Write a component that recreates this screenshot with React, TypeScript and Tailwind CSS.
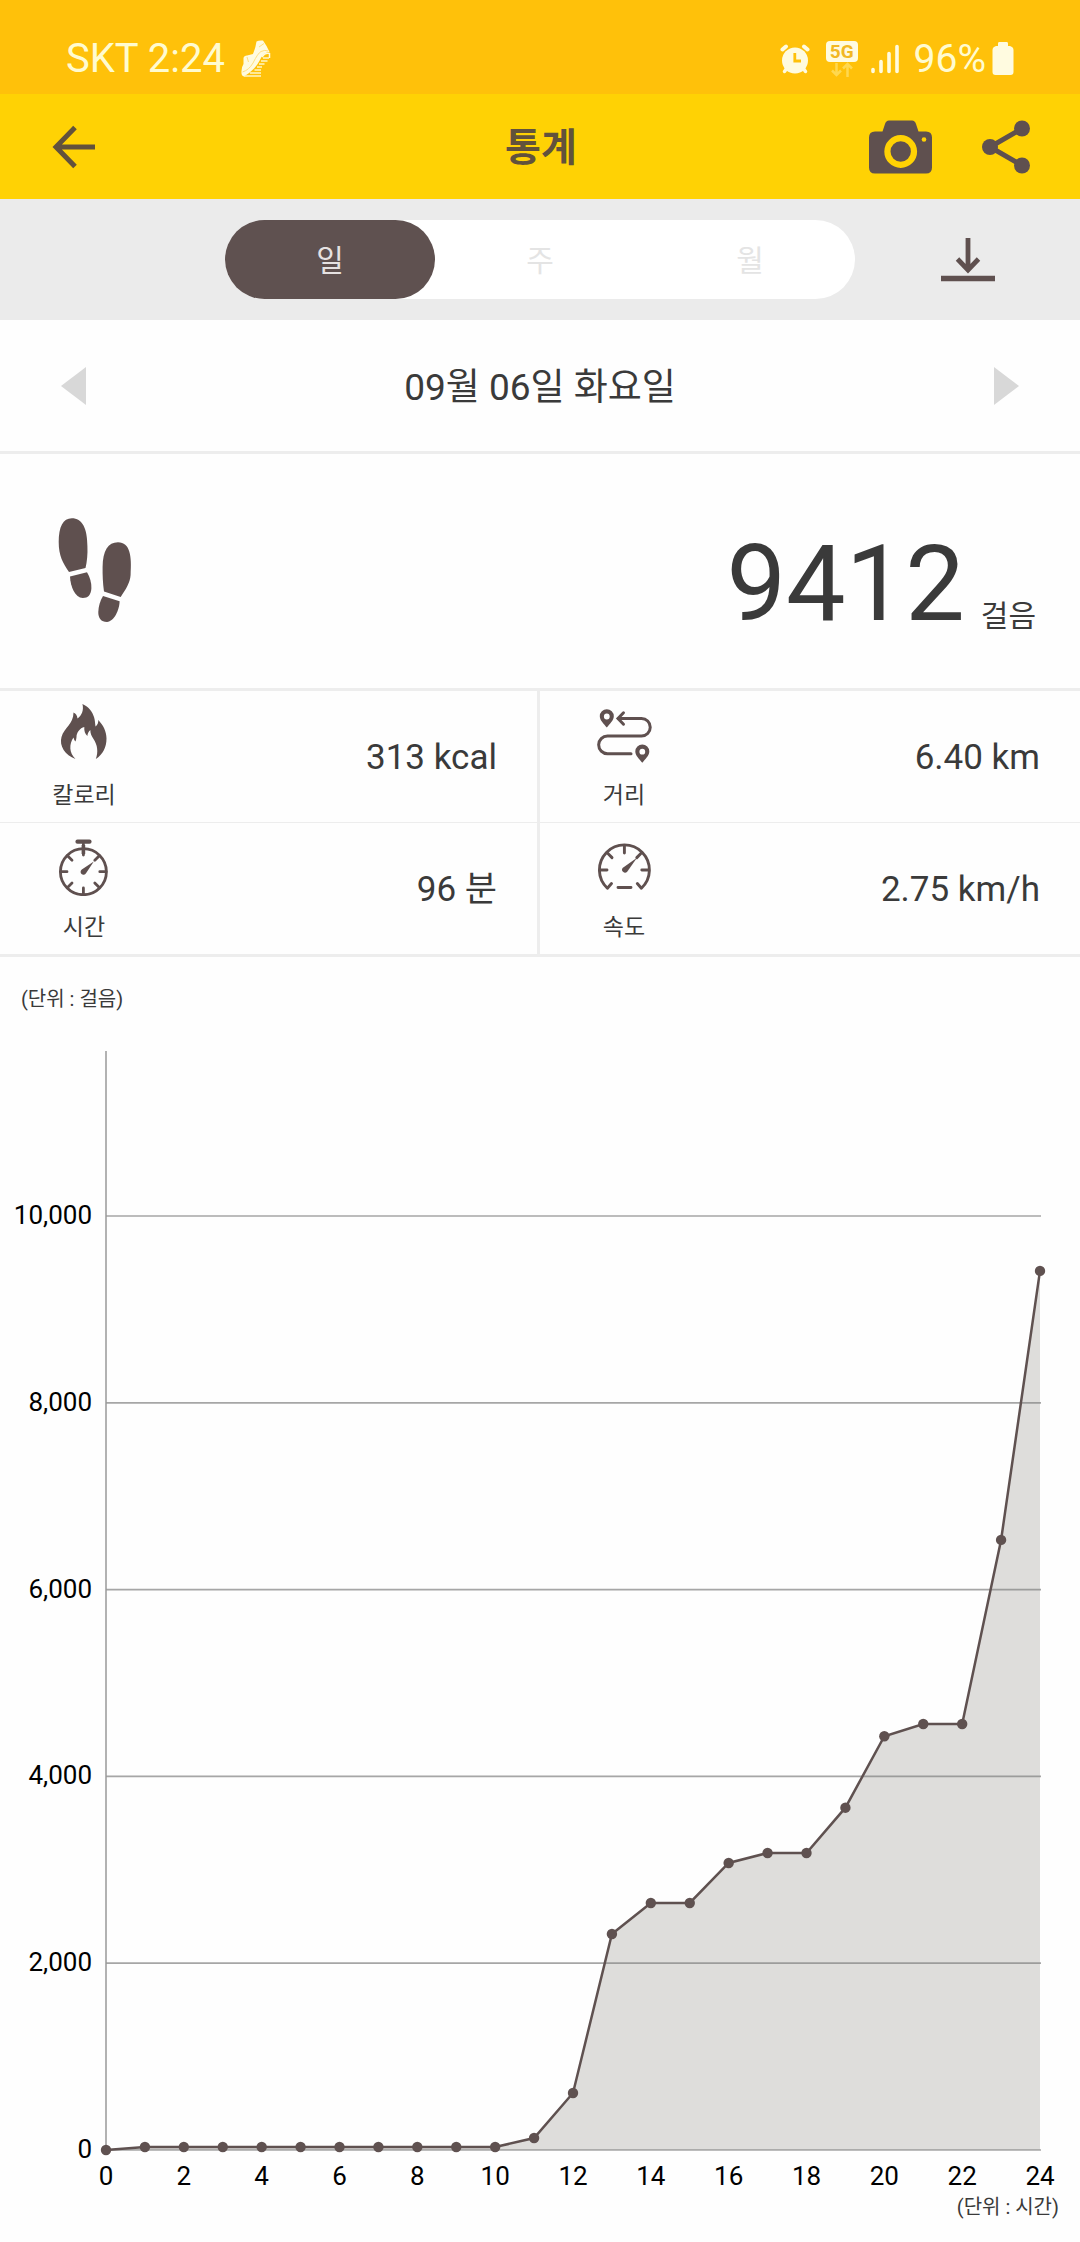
import React, { useState } from 'react';

type Period = 'day' | 'week' | 'month';

const periods: { id: Period; label: string }[] = [
  { id: 'day', label: '일' },
  { id: 'week', label: '주' },
  { id: 'month', label: '월' },
];

// cumulative steps for each hour, 0 to 24
const hourlySteps = [
  0, 32, 32, 32, 32, 32, 32, 32, 32, 32, 32, 128, 610, 2313, 2645, 2645, 3073, 3180, 3180, 3665,
  4430, 4561, 4561, 6532, 9412,
];

const ShoeIcon = () => (
  <svg viewBox="0 0 30 38" className="w-[30px] h-[38px]" aria-hidden="true">
    <path
      d="M15.500 1.500Q18 0 22 0.500Q26 6 28.500 12Q24 12 20.500 17Q16 26 12 29.500Q8 33.500 3 36.500Q0 36 0.500 31Q0.500 27 2.500 24L2.500 18Q3 15.500 6 15.500L12 14Q14.500 8 15.500 1.500Z"
      fill="#fffbe0"
    />
    <path
      d="M22 18H28M20 21H26.500M18 24H23.500M16 27H21M13.500 30H20M9 33H20M3 36H20"
      stroke="#fff6c4"
      strokeWidth="1.700"
    />
    <path d="M21 17Q24 12.500 28.500 13.500V18" fill="none" stroke="#fffbe0" strokeWidth="1.500" />
    <path
      d="M1.500 32Q8 30 12 23Q17 13 20 11.500Q24 9.500 27 11M6 17L7.500 22M18 7L23 3.500"
      fill="none"
      stroke="#ffdf80"
      strokeWidth="1"
    />
  </svg>
);

const AlarmIcon = () => (
  <svg viewBox="0 0 30 30" className="w-[30px] h-[30px]" aria-hidden="true">
    <g stroke="#fffbe0" strokeLinecap="round">
      <path d="M2.500 5.500L6 2.500M27.500 5.500L24 2.500" strokeWidth="4" />
      <path d="M7 24L4.500 27.500M23 24L25.500 27.500" strokeWidth="3.500" />
    </g>
    <circle cx="15" cy="16.500" r="13" fill="#fffbe0" />
    <path d="M14.800 9V17H21" fill="none" stroke="#ffc10a" strokeWidth="2.800" />
  </svg>
);

const SignalIcon = () => (
  <svg viewBox="0 0 30 30" className="w-[30px] h-[30px]" aria-hidden="true">
    <path
      d="M3 25.500V27.500M11 17.500V27.500M19 9.500V27.500M27 2.500V27.500"
      stroke="#fffbe0"
      strokeWidth="3.600"
      strokeLinecap="round"
    />
  </svg>
);

const BatteryIcon = () => (
  <svg viewBox="0 0 22 34" className="w-[22px] h-[34px]" aria-hidden="true">
    <path
      d="M7 0H15Q16 0 16 1.500V4H18Q21.500 5 21.500 8V30Q21.500 33 18.500 33H3.500Q0.500 33 0.500 30V8Q0.500 5 4 4H6V1.500Q6 0 7 0Z"
      fill="#fffbe0"
    />
  </svg>
);

const BackIcon = () => (
  <svg viewBox="0 0 44 44" className="w-11 h-11" fill="none" stroke="#62523c" strokeWidth="5" aria-hidden="true">
    <path d="M43 22H5M23 2.500L4 22L23 41.500" />
  </svg>
);

const CameraIcon = () => (
  <svg viewBox="0 0 63 54" className="w-[63px] h-[54px]" aria-hidden="true">
    <path
      d="M16 4Q17 0.500 20 0.500H43Q46 0.500 47 4L49.500 11.500H57Q63 11.500 63 17.500V47.500Q63 53.500 57 53.500H6Q0 53.500 0 47.500V17.500Q0 11.500 6 11.500H13.500Z"
      fill="#5f504f"
    />
    <circle cx="31.700" cy="31.500" r="13.300" fill="none" stroke="#ffd204" strokeWidth="6.200" />
    <circle cx="55" cy="19.500" r="2.300" fill="#ffd204" />
  </svg>
);

const ShareIcon = () => (
  <svg viewBox="0 0 48 54" className="w-12 h-[54px]" fill="#5f504f" aria-hidden="true">
    <path d="M40 8.500L8 27L40 45.500" fill="none" stroke="#5f504f" strokeWidth="5" />
    <circle cx="40" cy="8.500" r="8" />
    <circle cx="8" cy="27" r="8" />
    <circle cx="40" cy="45.500" r="8" />
  </svg>
);

const DownloadIcon = () => (
  <svg viewBox="0 0 54 44" className="w-[54px] h-11" fill="none" stroke="#5f504f" aria-hidden="true">
    <path d="M27 0V32M16.500 21L27 32L37.500 21" strokeWidth="4.800" />
    <path d="M0 40.500H54" strokeWidth="5.500" />
  </svg>
);

const FootprintsIcon = () => (
  <svg viewBox="0 0 74 105" className="w-[74px] h-[105px]" fill="#5f504f" aria-hidden="true">
    <path d="M13.800 0.300C5 0.300 0.700 9 0.700 24C0.700 38 5 45 11 54L27.500 50C29 44 29.800 36 29.400 28C29.400 10 24 0.300 13.800 0.300Z" />
    <path d="M12 58.600L29 54.300C32 59 33.500 65 33.400 70C33 77 30 80 24.800 80C17 80 12.500 69 12 58.600Z" />
    <path d="M60 24.300C50 24.300 44.800 33 44.600 49C44.500 57 44.800 65 46 73.500L62.700 79C68 71 72 65 72.600 57C74 38 72 24.300 60 24.300Z" />
    <path d="M45 78L61.600 83.300C61.500 92 56 103.500 49 104C43 104 40.200 100 40.300 94C40.500 88 42 83 45 78Z" />
  </svg>
);

const FlameIcon = () => (
  <svg viewBox="0 0 60 60" className="w-[60px] h-[60px]" fill="#5f504f" aria-hidden="true">
    <path d="M28.400 0C35 3 38.500 8 40 13C41 16 41 19 41.500 22.500C43.500 21 44.500 18.500 44.300 16C49 21 52.500 27 52.500 34.500C52.500 43 49 50.500 41.800 55C44.500 48 43.500 41 39.500 35C37.500 32 36.300 29.500 36.300 26C34.500 27.500 33.500 29.500 33.400 32C31 30 30 27 30.300 23C26 24 22.500 28.500 22.500 33C22.500 34.500 22 36 21.500 37.500C20.500 36.500 20 35.500 19.500 33.500C15 40 15 49 21.500 55C11 51 5 42 7.500 33C10 24 19.500 20 19.500 8.500C22 9.500 23.200 11.500 23.500 14.500C28 11.500 30 5.500 28.400 0Z" />
  </svg>
);

const RouteIcon = () => (
  <svg viewBox="0 0 60 60" className="w-[60px] h-[60px]" aria-hidden="true">
    <g fill="none" stroke="#5f504f" strokeWidth="3" strokeLinecap="round">
      <path d="M24.500 14.500H47.500A8.750 8.750 0 0 1 47.500 32H13.500A8.850 8.850 0 0 0 13.500 49.700H37" />
      <path d="M29.500 8.800L24 14.500L29.500 20.200" />
    </g>
    <g fill="#5f504f" fillRule="evenodd">
      <path d="M12.800 5.300A7 7 0 0 0 5.800 12.300C5.800 16.500 10 20 12.800 23.500C15.600 20 19.800 16.500 19.800 12.300A7 7 0 0 0 12.800 5.300ZM12.800 9.600A2.900 2.900 0 1 1 12.800 15.400A2.900 2.900 0 1 1 12.800 9.600Z" />
      <path d="M48.300 40.500A7 7 0 0 0 41.300 47.500C41.300 51.700 45.500 55.200 48.300 58.700C51.100 55.200 55.300 51.700 55.300 47.500A7 7 0 0 0 48.300 40.500ZM48.300 44.800A2.900 2.900 0 1 1 48.300 50.600A2.900 2.900 0 1 1 48.300 44.800Z" />
    </g>
  </svg>
);

const StopwatchIcon = () => (
  <svg viewBox="0 0 60 60" className="w-[60px] h-[60px]" aria-hidden="true">
    <g fill="none" stroke="#5f504f" strokeWidth="2.800" strokeLinecap="round">
      <circle cx="29.400" cy="35.700" r="23" />
      <path d="M29.400 8V19M29.400 52V58M7 35.700H13M45.800 35.700H52M13.500 19.800L18 24.300M45.300 19.800L40.800 24.300M13.500 51.600L18 47.100M45.300 51.600L40.800 47.100" />
    </g>
    <path d="M23.500 5.700H35.500" stroke="#5f504f" strokeWidth="4.200" strokeLinecap="round" />
    <path d="M29.400 9V18" stroke="#5f504f" strokeWidth="3.600" />
    <path d="M39.800 25.400L32 37.300A2.900 2.900 0 1 1 27.800 33.500Z" fill="#5f504f" />
  </svg>
);

const SpeedIcon = () => (
  <svg viewBox="0 0 60 60" className="w-[60px] h-[60px]" aria-hidden="true">
    <g fill="none" stroke="#5f504f" strokeWidth="2.900" strokeLinecap="round" strokeLinejoin="round">
      <path d="M17.500 47.500L13.400 52.200A25 25 0 1 1 47.400 52.200L43.300 47.500" />
      <path d="M30.400 10V17M6.500 34H13M47.800 34H54.300M13.700 17.300L18 21.600M47.100 17.300L42.800 21.600M24 51.500H37" />
    </g>
    <path d="M43 21.800L33.200 35.700A2.900 2.900 0 1 1 28.900 31.700Z" fill="#5f504f" />
  </svg>
);

const stats = [
  { label: '칼로리', value: '313 kcal', icon: FlameIcon },
  { label: '거리', value: '6.40 km', icon: RouteIcon },
  { label: '시간', value: '96 분', icon: StopwatchIcon },
  { label: '속도', value: '2.75 km/h', icon: SpeedIcon },
];

const StepsChart: React.FC = () => {
  const left = 106;
  const right = 1040;
  const base = 1120;
  const x = (hour: number) => left + ((right - left) * hour) / 24;
  const y = (steps: number) => base - (steps * 934) / 10000;
  const line = hourlySteps.map((s, i) => `${x(i)},${y(s)}`).join(' ');

  return (
    <svg viewBox="0 0 1080 1168" className="block w-full" role="img" aria-label="시간별 걸음 수">
      <polygon points={`${left},${base} ${line} ${right},${base}`} fill="#dedddb" />
      {[0, 2000, 4000, 6000, 8000, 10000].map((tick) => (
        <g key={tick}>
          <line x1={left} x2={right + 1} y1={y(tick)} y2={y(tick)} stroke="#808080" strokeOpacity="0.7" strokeWidth="1.700" />
          <text x="92" y={y(tick) + 8} textAnchor="end" fontSize="26" fill="#000">
            {tick.toLocaleString('en-US')}
          </text>
        </g>
      ))}
      <line x1={left} x2={left} y1="21" y2={base} stroke="#999999" strokeWidth="1.500" />
      <polyline points={line} fill="none" stroke="#5f5150" strokeWidth="2.500" />
      {hourlySteps.map((s, i) => (
        <circle key={i} cx={x(i)} cy={y(s)} r="5.200" fill="#5f5150" />
      ))}
      {hourlySteps.map(
        (_, i) =>
          i % 2 === 0 && (
            <text key={i} x={x(i)} y="1155" textAnchor="middle" fontSize="26" fill="#000">
              {i}
            </text>
          )
      )}
    </svg>
  );
};

const App: React.FC = () => {
  const [period, setPeriod] = useState<Period>('day');

  return (
    <div className="min-h-screen bg-[#fefefe] text-[#3a3a3a] font-['Roboto','Noto_Sans_CJK_KR',sans-serif]">
      {/* Status bar */}
      <div className="flex items-center justify-between bg-[#ffc10a] px-[66px] pt-9 pb-3 leading-[46px] text-[#fffbd0]">
        <div className="flex items-center gap-4 text-[40px]">
          <span>SKT 2:24</span>
          <ShoeIcon />
        </div>
        <div className="flex items-center text-[39px]">
          <AlarmIcon />
          <div className="ml-4 mr-3 flex flex-col items-center">
            <span className="rounded bg-[#fffbe0] px-1 text-[19px] leading-[21px] font-bold text-[#f2b824]">5G</span>
            <svg viewBox="0 0 22 15" className="w-[22px] h-[15px]" fill="none" stroke="#ffd84f" strokeWidth="2.500" aria-hidden="true">
              <path d="M5.500 1V13M1 8.500L5.500 13L10 8.500M16.500 15V2M12 6.500L16.500 2L21 6.500" />
            </svg>
          </div>
          <SignalIcon />
          <span className="ml-3.5 mr-1.5">96%</span>
          <BatteryIcon />
        </div>
      </div>

      {/* Header */}
      <header className="grid grid-cols-[1fr_auto_1fr] items-center bg-[#ffd204] pl-[52px] pr-[50px] py-[25px]">
        <button aria-label="뒤로" className="justify-self-start">
          <BackIcon />
        </button>
        <h1 className="pt-1 text-[39px] leading-[51px] font-bold text-[#62523c]">통계</h1>
        <div className="flex items-center gap-[50px] justify-self-end">
          <button aria-label="사진">
            <CameraIcon />
          </button>
          <button aria-label="공유">
            <ShareIcon />
          </button>
        </div>
      </header>

      {/* Period tabs */}
      <div className="grid grid-cols-[5fr_14fr_5fr] items-center bg-[#ebebeb] py-[21px]">
        <div role="tablist" className="col-start-2 grid grid-cols-3 rounded-full bg-white">
          {periods.map((p) => (
            <button
              key={p.id}
              role="tab"
              aria-selected={period === p.id}
              onClick={() => setPeriod(p.id)}
              className={`rounded-full pt-[21px] pb-[19px] text-[30px] leading-[39px] ${
                period === p.id ? 'bg-[#5f5150] text-[#e6e2e2]' : 'text-[#e4e4e4]'
              }`}
            >
              {p.label}
            </button>
          ))}
        </div>
        <button aria-label="저장" className="justify-self-center">
          <DownloadIcon />
        </button>
      </div>

      {/* Date */}
      <div className="flex items-center justify-between border-b-[3px] border-[#ededed] px-[61px] py-10">
        <button aria-label="이전 날짜">
          <svg viewBox="0 0 25 38" className="w-[25px] h-[38px]" fill="#d8d8d8" aria-hidden="true">
            <path d="M25 0V38L0 19Z" />
          </svg>
        </button>
        <h2 className="pt-1 text-[37px] leading-[47px]">09월 06일 화요일</h2>
        <button aria-label="다음 날짜">
          <svg viewBox="0 0 25 38" className="w-[25px] h-[38px]" fill="#d8d8d8" aria-hidden="true">
            <path d="M0 0V38L25 19Z" />
          </svg>
        </button>
      </div>

      {/* Total steps */}
      <div className="flex items-end justify-between border-b-[3px] border-[#ededed] pl-[58px] pr-11 pt-16 pb-[57px]">
        <div className="pb-2">
          <FootprintsIcon />
        </div>
        <p className="flex items-end gap-4">
          <span className="text-[106px] leading-[94px]">9412</span>
          <span className="text-[30px] leading-[30px]">걸음</span>
        </p>
      </div>

      {/* Stats */}
      <div className="grid grid-cols-2 border-b-[3px] border-[#ededed]">
        {stats.map((stat, index) => (
          <div
            key={stat.label}
            className={`flex items-center justify-between border-[#ededed] pr-10 ${index % 2 === 0 ? 'border-r-[3px]' : ''} ${
              index < 2 ? 'border-b' : ''
            }`}
          >
            <div className="flex w-[168px] flex-col items-center gap-[17px] pt-[13px] pb-[11px]">
              <stat.icon />
              <span className="text-[23px] leading-[30px]">{stat.label}</span>
            </div>
            <span className="pt-0.5 text-[35px] leading-[42px]">{stat.value}</span>
          </div>
        ))}
      </div>

      {/* Chart */}
      <section className="pt-[26px] pb-6">
        <p className="px-[21px] pb-[15px] text-[20px] leading-[32px]">(단위 : 걸음)</p>
        <StepsChart />
        <p className="px-[21px] text-right text-[20px] leading-[18px]">(단위 : 시간)</p>
      </section>
    </div>
  );
};

export default App;
